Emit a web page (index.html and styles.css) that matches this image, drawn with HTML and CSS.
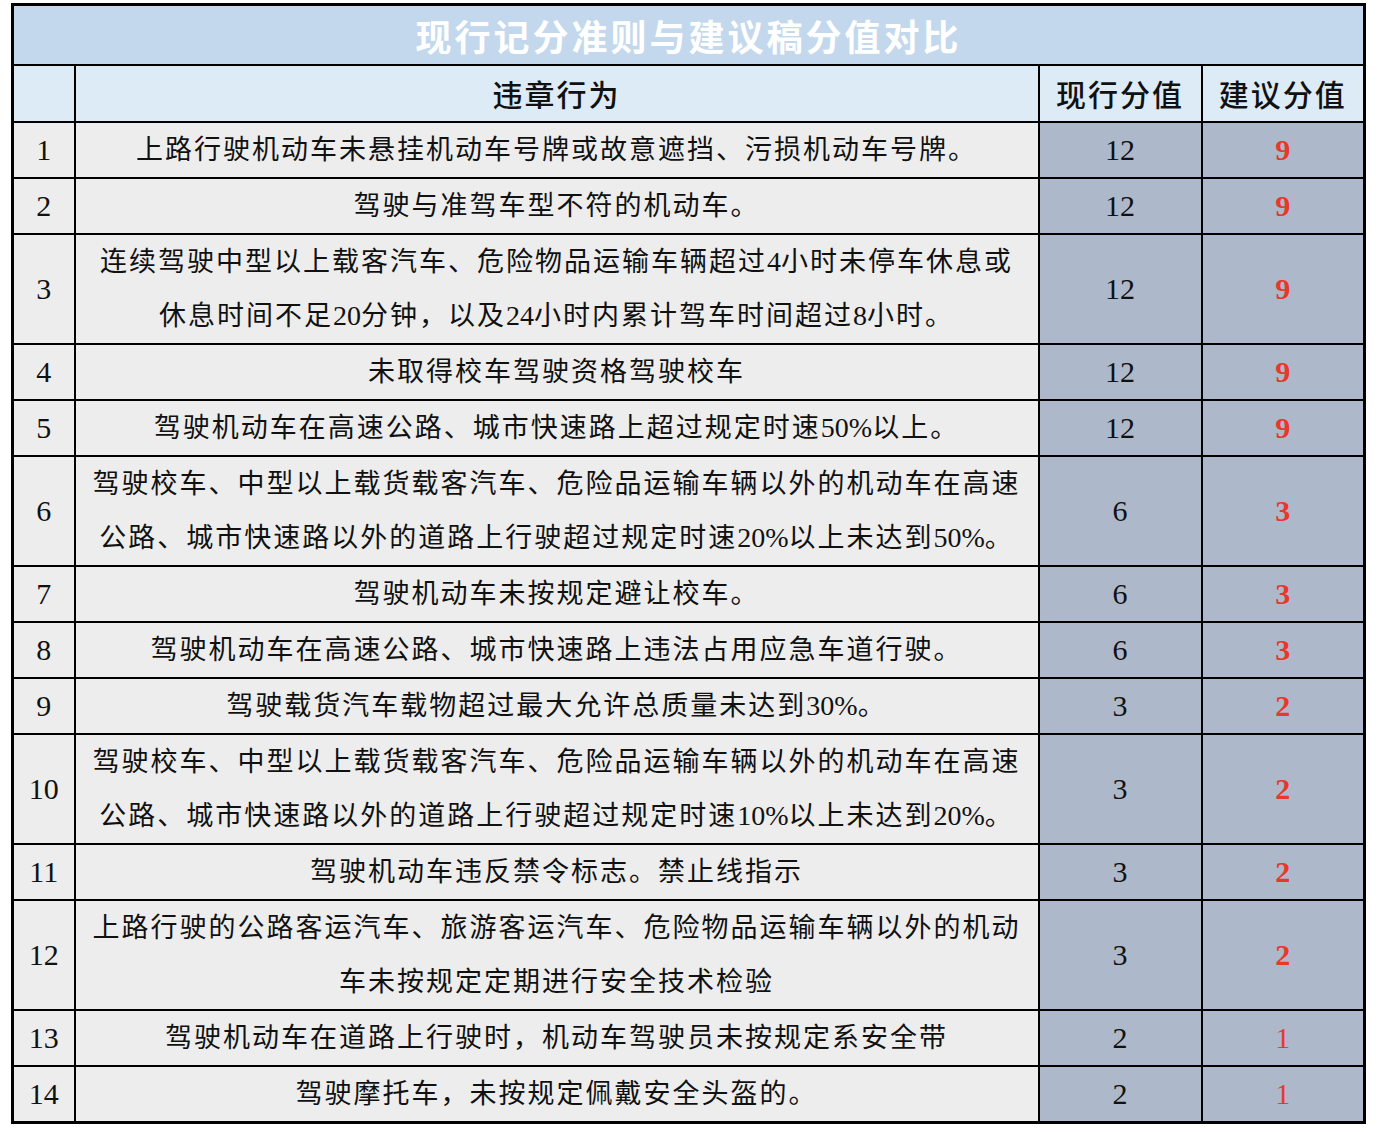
FILE: index.html
```html
<!DOCTYPE html>
<html lang="zh-CN">
<head>
<meta charset="utf-8">
<title>现行记分准则与建议稿分值对比</title>
<link rel="stylesheet" href="styles.css">
</head>
<body>
<table class="cmp">
  <colgroup>
    <col class="c-idx">
    <col class="c-act">
    <col class="c-cur">
    <col class="c-new">
  </colgroup>
  <thead>
    <tr class="title-row"><th colspan="4" class="title">现行记分准则与建议稿分值对比</th></tr>
    <tr class="head-row">
      <th class="h-idx"></th>
      <th class="h-act">违章行为</th>
      <th class="h-cur">现行分值</th>
      <th class="h-new">建议分值</th>
    </tr>
  </thead>
  <tbody>
    <tr><td class="idx">1</td><td class="act">上路行驶机动车未悬挂机动车号牌或故意遮挡、污损机动车号牌。</td><td class="cur">12</td><td class="new">9</td></tr>
    <tr><td class="idx">2</td><td class="act">驾驶与准驾车型不符的机动车。</td><td class="cur">12</td><td class="new">9</td></tr>
    <tr><td class="idx">3</td><td class="act">连续驾驶中型以上载客汽车、危险物品运输车辆超过<span class="num">4</span>小时未停车休息或<br>休息时间不足<span class="num">20</span>分钟，以及<span class="num">24</span>小时内累计驾车时间超过<span class="num">8</span>小时。</td><td class="cur">12</td><td class="new">9</td></tr>
    <tr><td class="idx">4</td><td class="act">未取得校车驾驶资格驾驶校车</td><td class="cur">12</td><td class="new">9</td></tr>
    <tr><td class="idx">5</td><td class="act">驾驶机动车在高速公路、城市快速路上超过规定时速<span class="num">50%</span>以上。</td><td class="cur">12</td><td class="new">9</td></tr>
    <tr><td class="idx">6</td><td class="act">驾驶校车、中型以上载货载客汽车、危险品运输车辆以外的机动车在高速<br>公路、城市快速路以外的道路上行驶超过规定时速<span class="num">20%</span>以上未达到<span class="num">50%</span>。</td><td class="cur">6</td><td class="new">3</td></tr>
    <tr><td class="idx">7</td><td class="act">驾驶机动车未按规定避让校车。</td><td class="cur">6</td><td class="new">3</td></tr>
    <tr><td class="idx">8</td><td class="act">驾驶机动车在高速公路、城市快速路上违法占用应急车道行驶。</td><td class="cur">6</td><td class="new">3</td></tr>
    <tr><td class="idx">9</td><td class="act">驾驶载货汽车载物超过最大允许总质量未达到<span class="num">30%</span>。</td><td class="cur">3</td><td class="new">2</td></tr>
    <tr><td class="idx">10</td><td class="act">驾驶校车、中型以上载货载客汽车、危险品运输车辆以外的机动车在高速<br>公路、城市快速路以外的道路上行驶超过规定时速<span class="num">10%</span>以上未达到<span class="num">20%</span>。</td><td class="cur">3</td><td class="new">2</td></tr>
    <tr><td class="idx">11</td><td class="act">驾驶机动车违反禁令标志。禁止线指示</td><td class="cur">3</td><td class="new">2</td></tr>
    <tr><td class="idx">12</td><td class="act">上路行驶的公路客运汽车、旅游客运汽车、危险物品运输车辆以外的机动<br>车未按规定定期进行安全技术检验</td><td class="cur">3</td><td class="new">2</td></tr>
    <tr><td class="idx">13</td><td class="act">驾驶机动车在道路上行驶时，机动车驾驶员未按规定系安全带</td><td class="cur">2</td><td class="new thin">1</td></tr>
    <tr><td class="idx">14</td><td class="act">驾驶摩托车，未按规定佩戴安全头盔的。</td><td class="cur">2</td><td class="new thin">1</td></tr>
  </tbody>
</table>
</body>
</html>
```

FILE: styles.css
```css
html, body {
  margin: 0;
  padding: 0;
  background: #ffffff;
}

body {
  padding: 3px 0 0 11px;
  font-family: "Liberation Serif", "Noto Sans CJK SC", serif;
  color: #111111;
}

.cmp {
  border-collapse: collapse;
  width: 1352px;
  table-layout: fixed;
  border: 3px solid #000;
}

.c-idx { width: 62px; }
.c-act { width: 964px; }
.c-cur { width: 163px; }
.c-new { width: 163px; }

.cmp th,
.cmp td {
  border: 2px solid #000;
  padding: 0;
  text-align: center;
  vertical-align: middle;
}

.title-row th {
  height: 58px;
  background: #c3d8ec;
  color: #ffffff;
  font-family: "Noto Sans CJK SC", "Liberation Sans", sans-serif;
  font-weight: 700;
  font-size: 36px;
  letter-spacing: 3px;
  line-height: 58px;
}

.head-row th {
  height: 55px;
  background: #ddebf7;
  font-family: "Noto Sans CJK SC", sans-serif;
  font-weight: 500;
  font-size: 30px;
  letter-spacing: 2px;
  line-height: 55px;
  color: #111;
}

.cmp td {
  line-height: 54px;
  font-size: 30px;
}

.idx {
  background: #ededed;
}

.act {
  background: #ededed;
  font-size: 27px !important;
  letter-spacing: 2px;
}

.num {
  letter-spacing: 0;
  font-size: 28px;
}

.cur {
  background: #adb9ca;
}

.new {
  background: #adb9ca;
  color: #e8382b;
  font-weight: 700;
}

.new.thin {
  font-weight: 400;
}
```
